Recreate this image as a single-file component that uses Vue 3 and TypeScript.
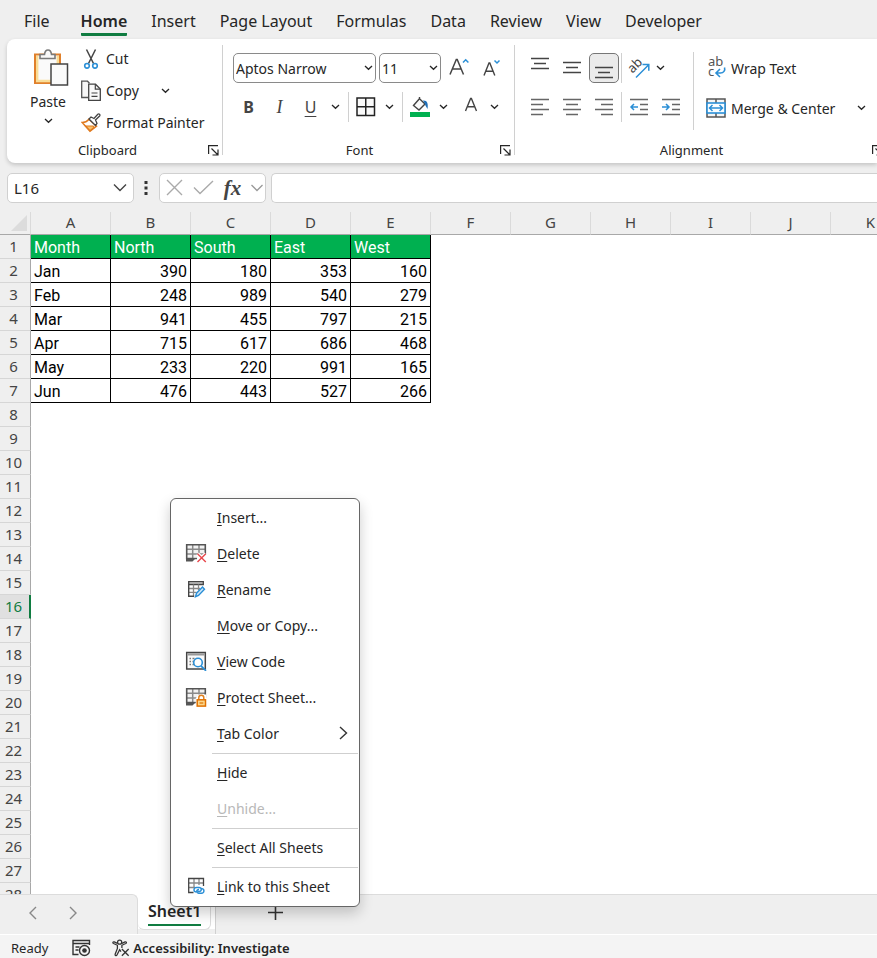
<script setup lang="ts">
import { h, ref } from 'vue'

interface MenuEntry {
  key: string
  rest: string
  icon?: string
  disabled?: boolean
  submenu?: boolean
  ruleAfter?: boolean
}

const tabs = ['File', 'Home', 'Insert', 'Page Layout', 'Formulas', 'Data', 'Review', 'View', 'Developer']
const activeTab = ref('Home')

const columns = ['A', 'B', 'C', 'D', 'E', 'F', 'G', 'H', 'I', 'J', 'K']
const data: (string | number)[][] = [
  ['Month', 'North', 'South', 'East', 'West'],
  ['Jan', 390, 180, 353, 160],
  ['Feb', 248, 989, 540, 279],
  ['Mar', 941, 455, 797, 215],
  ['Apr', 715, 617, 686, 468],
  ['May', 233, 220, 991, 165],
  ['Jun', 476, 443, 527, 266],
]
const rowCount = 28
const activeRow = 16
const cellName = ref('L16')
const formula = ref('')
const fontName = ref('Aptos Narrow')
const fontSize = ref('11')

const menu: MenuEntry[] = [
  { key: 'I', rest: 'nsert...' },
  { key: 'D', rest: 'elete', icon: 'delete' },
  { key: 'R', rest: 'ename', icon: 'rename' },
  { key: 'M', rest: 'ove or Copy...' },
  { key: 'V', rest: 'iew Code', icon: 'code' },
  { key: 'P', rest: 'rotect Sheet...', icon: 'protect' },
  { key: 'T', rest: 'ab Color', submenu: true, ruleAfter: true },
  { key: 'H', rest: 'ide' },
  { key: 'U', rest: 'nhide...', disabled: true, ruleAfter: true },
  { key: 'S', rest: 'elect All Sheets', ruleAfter: true },
  { key: 'L', rest: 'ink to this Sheet', icon: 'link' },
]

const cellAt = (row: number, col: number) => data[row - 1]?.[col] ?? ''
const cellClass = (row: number, col: number) => ({
  filled: row <= data.length && col < 5,
  heading: row === 1 && col < 5,
  number: typeof cellAt(row, col) === 'number',
})

const Chevron = () =>
  h('svg', { width: 9, height: 6, viewBox: '0 0 9 6', 'aria-hidden': 'true' }, [
    h('path', { d: 'M1 1l3.5 3.3L8 1', fill: 'none', stroke: '#262626', 'stroke-width': 1.3 }),
  ])
const Launcher = () =>
  h('svg', { width: 11, height: 11, viewBox: '0 0 11 11', 'aria-hidden': 'true' }, [
    h('path', { d: 'M.6 9V.6H10M3.5 3.5l6 6M10 4.5V10H4.5', fill: 'none', stroke: '#262626', 'stroke-width': 1.2 }),
  ])
</script>

<template>
  <div class="app">
    <nav class="tabs" aria-label="Ribbon tabs">
      <button
        v-for="tab in tabs"
        :key="tab"
        class="tab"
        :class="{ active: tab === activeTab, file: tab === 'File' }"
        @click="activeTab = tab"
      >{{ tab }}</button>
    </nav>

    <section class="ribbon">
      <div class="group clipboard">
        <div class="body">
          <button class="paste">
            <svg width="36" height="40" viewBox="0 0 36 40">
              <rect x="2" y="6.5" width="25" height="28.5" fill="#fafafa" stroke="#e0802b" stroke-width="2" />
              <path d="M4.2 8v25h20.6V8" fill="none" stroke="#f9dd97" stroke-width="2.4" />
              <path d="M7 10.500V6.500h4.500c.3-3 1.600-4.500 3.500-4.500s3.200 1.500 3.500 4.500H22v4z" fill="#fafafa" stroke="#7a7a7a" stroke-width="1.600" />
              <rect x="18" y="16" width="16.500" height="21" fill="#fafafa" stroke="#444" stroke-width="1.500" />
            </svg>
            <span>Paste</span>
            <Chevron />
          </button>
          <div class="stack">
            <button class="command">
              <svg width="20" height="22" viewBox="0 0 20 22">
                <path d="M5.500 1.500l7 14M14.500 1.500l-7 14" fill="none" stroke="#444" stroke-width="1.500" />
                <circle cx="6" cy="17.800" r="2.300" fill="#fff" stroke="#2b8fd6" stroke-width="1.600" />
                <circle cx="14" cy="17.800" r="2.300" fill="#fff" stroke="#2b8fd6" stroke-width="1.600" />
              </svg>
              <span>Cut</span>
            </button>
            <button class="command">
              <svg width="20" height="22" viewBox="0 0 20 22">
                <path d="M7 17.500H.7V1.200h5.800l2 2" fill="#f7f7f7" stroke="#555" stroke-width="1.300" />
                <path d="M7.700 4.200h6.800L19.300 9v11.300H7.700z" fill="#fafafa" stroke="#444" stroke-width="1.300" />
                <path d="M14.300 4.200v5h5M10.500 13h6M10.500 16.300h6" fill="none" stroke="#444" stroke-width="1.200" />
              </svg>
              <span>Copy</span>
              <Chevron class="copy-more" />
            </button>
            <button class="command">
              <svg width="20" height="22" viewBox="0 0 20 22">
                <path d="M1.200 10.500c3 0 4.800-.8 6.800-3.300l7.500 7-6.500 5z" fill="#fff" stroke="#e07a1f" stroke-width="1.500" />
                <path d="M4.500 14h7.500l1 1.500-4 3.200z" fill="#f6c16b" stroke="#e07a1f" stroke-width="1.200" />
                <path d="M8 7l2-2 3 1.500 3.800-4.300c1.200-1 2.800.5 1.800 1.800L14.500 8l1.500 3.500-1.500 2z" fill="#fff" stroke="#444" stroke-width="1.300" />
              </svg>
              <span>Format Painter</span>
            </button>
          </div>
        </div>
        <div class="caption"><span>Clipboard</span><button aria-label="Clipboard settings"><Launcher /></button></div>
      </div>

      <div class="group font">
        <div class="body rows">
          <div class="row">
            <label class="picker name">
              <select v-model="fontName" aria-label="Font"><option>Aptos Narrow</option></select>
              <Chevron />
            </label>
            <label class="picker size">
              <select v-model="fontSize" aria-label="Font size"><option>11</option></select>
              <Chevron />
            </label>
            <button class="tool grow" aria-label="Increase font size">
              <svg width="22" height="22" viewBox="0 0 22 22">
                <path d="M2 17.500L8.300 2.500h.9l6.300 15M4.500 12h8.500" fill="none" stroke="#444" stroke-width="1.500" />
                <path d="M15 5.500l2.700-2.700L20.400 5.500" fill="none" stroke="#2b8fd6" stroke-width="1.500" />
              </svg>
            </button>
            <button class="tool shrink" aria-label="Decrease font size">
              <svg width="20" height="22" viewBox="0 0 20 22">
                <path d="M2 18.500L7 6h.8l5 12.500M4 14.200h7" fill="none" stroke="#444" stroke-width="1.400" />
                <path d="M12.500 3.500L15 6l2.500-2.500" fill="none" stroke="#2b8fd6" stroke-width="1.500" />
              </svg>
            </button>
          </div>
          <div class="row">
            <button class="tool letter bold">B</button>
            <button class="tool letter italic">I</button>
            <button class="tool letter under">U</button>
            <button class="tool more" aria-label="Underline styles"><Chevron /></button>
            <i class="divider"></i>
            <button class="tool" aria-label="Borders">
              <svg width="20" height="20" viewBox="0 0 20 20">
                <path d="M1 1h17.500v17.500H1zM9.750 1v17.500M1 9.750h17.500" fill="#fafafa" stroke="#222" stroke-width="1.500" />
              </svg>
            </button>
            <button class="tool more" aria-label="Border styles"><Chevron /></button>
            <i class="divider"></i>
            <button class="tool" aria-label="Fill color">
              <svg width="20" height="22" viewBox="0 0 20 22">
                <path d="M9.200 3L3.500 9.500l5.500 4.500L15 8 9.500 2.800V1" fill="#fafafa" stroke="#444" stroke-width="1.400" />
                <path d="M13 4.500c4-.5 5.500 3 4.500 8.500-1.200-2-2.300-3.500-2.500-5z" fill="#1f6fb8" />
                <rect y="16" width="20" height="5" fill="#00b050" />
              </svg>
            </button>
            <button class="tool more" aria-label="Fill colors"><Chevron /></button>
            <button class="tool font-color" aria-label="Font color">
              <svg width="14" height="22" viewBox="0 0 14 22">
                <path d="M1.500 15L6.600 2.500h.8l5.100 12.500M3.500 10.800h7" fill="none" stroke="#444" stroke-width="1.400" />
              </svg>
            </button>
            <button class="tool more" aria-label="Font colors"><Chevron /></button>
          </div>
        </div>
        <div class="caption"><span>Font</span><button aria-label="Font settings"><Launcher /></button></div>
      </div>

      <div class="group alignment">
        <div class="body">
          <div class="rows">
            <div class="row">
              <button class="tool square" aria-label="Top align">
                <svg width="20" height="30" viewBox="0 0 20 30"><path d="M1 5.500h18M4 10.500h12M1 15.500h18" stroke="#444" stroke-width="1.400" /></svg>
              </button>
              <button class="tool square" aria-label="Middle align">
                <svg width="20" height="30" viewBox="0 0 20 30"><path d="M1 9.500h18M4 14.500h12M1 19.500h18" stroke="#444" stroke-width="1.400" /></svg>
              </button>
              <button class="tool square pressed" aria-label="Bottom align">
                <svg width="20" height="30" viewBox="0 0 20 30"><path d="M1 14.500h18M4 19.500h12M1 24.500h18" stroke="#444" stroke-width="1.400" /></svg>
              </button>
              <i class="divider"></i>
              <button class="tool" aria-label="Orientation">
                <svg class="lettered" width="22" height="24" viewBox="0 0 22 24">
                  <text transform="rotate(-45 7 10)" x="-1" y="13" font-size="13" fill="#444">ab</text>
                  <path d="M7 21.500L19.500 9M13.500 8.500h6.300v6.300" fill="none" stroke="#2b8fd6" stroke-width="1.500" />
                </svg>
              </button>
              <button class="tool more orient-more" aria-label="Orientation options"><Chevron /></button>
            </div>
            <div class="row">
              <button class="tool square" aria-label="Align left">
                <svg width="20" height="20" viewBox="0 0 20 20"><path d="M1 2.500h18M1 7.500h12M1 12.500h18M1 17.500h12" stroke="#666" stroke-width="1.600" /></svg>
              </button>
              <button class="tool square" aria-label="Center">
                <svg width="20" height="20" viewBox="0 0 20 20"><path d="M1 2.500h18M4 7.500h12M1 12.500h18M4 17.500h12" stroke="#666" stroke-width="1.600" /></svg>
              </button>
              <button class="tool square" aria-label="Align right">
                <svg width="20" height="20" viewBox="0 0 20 20"><path d="M1 2.500h18M7 7.500h12M1 12.500h18M7 17.500h12" stroke="#666" stroke-width="1.600" /></svg>
              </button>
              <i class="divider"></i>
              <button class="tool indent" aria-label="Decrease indent">
                <svg width="20" height="20" viewBox="0 0 20 20">
                  <path d="M1 2.500h18M11 7.500h8M11 12.500h8M1 17.500h18" stroke="#666" stroke-width="1.600" />
                  <path d="M9 10H2M5 7l-3 3 3 3" fill="none" stroke="#2b8fd6" stroke-width="1.500" />
                </svg>
              </button>
              <button class="tool indent" aria-label="Increase indent">
                <svg width="20" height="20" viewBox="0 0 20 20">
                  <path d="M1 2.500h18M11 7.500h8M11 12.500h8M1 17.500h18" stroke="#666" stroke-width="1.600" />
                  <path d="M1 10h7M5 7l3 3-3 3" fill="none" stroke="#2b8fd6" stroke-width="1.500" />
                </svg>
              </button>
            </div>
          </div>
          <i class="divider tall"></i>
          <div class="rows wide">
            <button class="command">
              <svg class="lettered" width="20" height="20" viewBox="0 0 20 20">
                <text x="2" y="8" font-size="13" fill="#555">ab</text>
                <text x="2" y="18" font-size="13" fill="#555">c</text>
                <path d="M18.500 9.500c1 3-1 5.500-4 5.500h-4M14 11l-4 4 4 4" fill="none" stroke="#2b8fd6" stroke-width="1.600" />
              </svg>
              <span>Wrap Text</span>
            </button>
            <button class="command">
              <svg width="20" height="20" viewBox="0 0 20 20">
                <path d="M1 1h18v18H1zM10 1v18" fill="#f5f5f5" stroke="#555" stroke-width="1.500" />
                <rect x="1" y="5" width="18" height="10" fill="#fafdff" stroke="#2b8fd6" stroke-width="1.600" />
                <path d="M3.500 10h13M6.500 7l-3 3 3 3M13.500 7l3 3-3 3" fill="none" stroke="#2b8fd6" stroke-width="1.500" />
              </svg>
              <span>Merge &amp; Center</span>
              <Chevron class="merge-more" />
            </button>
          </div>
        </div>
        <div class="caption"><span>Alignment</span><button aria-label="Alignment settings"><Launcher /></button></div>
      </div>
    </section>

    <section class="formula-bar">
      <div class="box name-box">
        <input v-model="cellName" aria-label="Name box" />
        <button aria-label="Named ranges">
          <svg width="14" height="9" viewBox="0 0 14 9"><path d="M1 1.500l6 6 6-6" fill="none" stroke="#444" stroke-width="1.400" /></svg>
        </button>
      </div>
      <svg class="dots" width="4" height="14" viewBox="0 0 4 14"><path d="M.5 0h3v3h-3zM.5 5.500h3v3h-3zM.5 11h3v3h-3z" fill="#333" /></svg>
      <div class="box actions">
        <button aria-label="Cancel">
          <svg width="17" height="17" viewBox="0 0 17 17"><path d="M1 1l15 15M16 1L1 16" stroke="#aaa" stroke-width="1.400" /></svg>
        </button>
        <button aria-label="Enter">
          <svg width="21" height="15" viewBox="0 0 21 15"><path d="M1 7.500l6 6L20 1" fill="none" stroke="#aaa" stroke-width="1.400" /></svg>
        </button>
        <button class="fx" aria-label="Insert function">fx</button>
        <button aria-label="Recent functions">
          <svg width="12" height="8" viewBox="0 0 12 8"><path d="M.5 1L6 6.500 11.500 1" fill="none" stroke="#999" stroke-width="1.300" /></svg>
        </button>
      </div>
      <input v-model="formula" class="box formula" aria-label="Formula" />
    </section>

    <main class="sheet">
      <table>
        <colgroup><col class="row-col" /><col v-for="c in columns" :key="c" class="data-col" /></colgroup>
        <thead>
          <tr>
            <th class="corner" aria-label="Select all"><svg width="17" height="17" viewBox="0 0 17 17"><path d="M16 0v16H0z" fill="#dcdcdc" /></svg></th>
            <th v-for="c in columns" :key="c" scope="col">{{ c }}</th>
          </tr>
        </thead>
        <tbody>
          <tr v-for="r in rowCount" :key="r">
            <th scope="row" :class="{ current: r === activeRow }">{{ r }}</th>
            <td v-for="(c, i) in columns" :key="c" :class="cellClass(r, i)">{{ cellAt(r, i) }}</td>
          </tr>
        </tbody>
      </table>
    </main>

    <footer class="sheet-bar">
      <div class="arrows">
        <button aria-label="Previous sheet"><svg width="9" height="14" viewBox="0 0 9 14"><path d="M8 1L2 7l6 6" fill="none" stroke="#888" stroke-width="1.400" /></svg></button>
        <button aria-label="Next sheet"><svg width="9" height="14" viewBox="0 0 9 14"><path d="M1 1l6 6-6 6" fill="none" stroke="#888" stroke-width="1.400" /></svg></button>
      </div>
      <button class="sheet-tab"><span>Sheet1</span></button>
      <div class="rest">
        <button aria-label="New sheet"><svg width="15" height="15" viewBox="0 0 15 15"><path d="M7.500 0v15M0 7.500h15" stroke="#333" stroke-width="1.600" /></svg></button>
      </div>
    </footer>

    <div class="status">
      <span>Ready</span>
      <svg width="19" height="18" viewBox="0 0 19 18">
        <path d="M6.500 15.500H1V1.500h16.500V6M1 4.500h16.500M3.500 8h4M3.500 11h3" fill="none" stroke="#333" stroke-width="1.400" />
        <circle cx="12.500" cy="11.500" r="5" fill="#f4f4f4" stroke="#333" stroke-width="1.400" />
        <circle cx="12.500" cy="11.500" r="2.300" fill="#333" />
      </svg>
      <button class="access">
        <svg width="18" height="18" viewBox="0 0 20 20">
          <circle cx="8.500" cy="3.500" r="2.300" fill="none" stroke="#333" stroke-width="1.400" />
          <path d="M6 4.800L2.500 3.200c-1.500-.5-2 1.200-.8 1.800L6 7v3.500L3.500 17c-.3 1.500 1.400 2 2 .8L8.500 12l1.500 2M11 4.800l3.500-1.600c1.500-.5 2 1.200.8 1.800L11 7v3" fill="none" stroke="#333" stroke-width="1.400" />
          <path d="M11 11l7.500 7.500M18.500 11L11 18.500" stroke="#333" stroke-width="1.500" />
        </svg>
        <span>Accessibility: Investigate</span>
      </button>
    </div>

    <div class="menu" role="menu">
      <template v-for="m in menu" :key="m.key">
        <button class="item" role="menuitem" :disabled="m.disabled">
          <span class="icon">
            <svg v-if="m.icon === 'delete' || m.icon === 'protect'" width="22" height="20" viewBox="0 0 22 20">
              <path d="M1.700 1.700h18.600V14H8.500l-2.200 3.500H1.700z" fill="#f2f2f2" />
              <path d="M1.700 6.200h18.600M1.700 11h18.600M7.700 1.700V15M14 1.700V14" fill="none" stroke="#8a8a8a" stroke-width="1.500" />
              <path d="M12 15.500H1.700V1.700h18.600V11" fill="none" stroke="#555" stroke-width="1.600" />
              <path d="M1 15.500h9.500L7.500 18.500H1z" fill="#555" />
              <g v-if="m.icon === 'delete'">
                <path d="M12.500 10.800l8 8M20.800 10.800l-8 8" stroke="#fff" stroke-width="4" />
                <path d="M12.500 10.800l8.300 8.300M20.800 10.800l-8.300 8.300" stroke="#e8474c" stroke-width="1.400" />
              </g>
              <g v-else>
                <path d="M10.800 11.500L13 7.500h8v12H10.800z" fill="#fff" />
                <path d="M13.800 13v-2.200a2.500 2.500 0 0 1 5 0V13" fill="none" stroke="#e0801f" stroke-width="1.500" />
                <rect x="12.200" y="12.800" width="8.300" height="6.300" fill="#fbd78b" stroke="#e07000" stroke-width="1.500" />
                <path d="M14.500 16h3.800" stroke="#e07000" stroke-width="1.200" />
              </g>
            </svg>
            <svg v-else-if="m.icon === 'rename'" width="22" height="20" viewBox="0 0 22 20">
              <path d="M3.700 2.700h14.600v2.800H3.700z" fill="#ccc" stroke="#444" stroke-width="1.300" />
              <path d="M4 9.500h11M4 13.300h7.500M8.500 5.500v11.500M13.500 5.500v5.500" fill="none" stroke="#888" stroke-width="1.300" />
              <path d="M3.700 5.500v11.800h5.500" fill="none" stroke="#444" stroke-width="1.400" />
              <path d="M10.500 17.700l1-3.500 6-6.200 2 2.200-6 6.200z" fill="#cfe6f7" stroke="#2b8fd6" stroke-width="1.400" />
            </svg>
            <svg v-else-if="m.icon === 'code'" width="22" height="20" viewBox="0 0 22 20">
              <path d="M1.700 1.500h18.600V18H1.700z" fill="#fafafa" stroke="#444" stroke-width="1.500" />
              <path d="M2.500 2.300h17v2.200h-17z" fill="#999" />
              <path d="M4.500 7.500h1.500M7.500 7.500h2M4.500 10.500h1.500M7.500 10.500h1.500M4.500 13.500h1.500M7.500 13.500h1.500" stroke="#777" stroke-width="1.300" />
              <circle cx="13" cy="11.500" r="4.300" fill="#fff" stroke="#2b8fd6" stroke-width="1.600" />
              <path d="M16 14.800l5 5" stroke="#2b8fd6" stroke-width="1.800" />
            </svg>
            <svg v-else-if="m.icon === 'link'" width="22" height="20" viewBox="0 0 22 20">
              <path d="M4 7h15M4 11.500h6M9 2.500V11M14 2.500V9" fill="none" stroke="#888" stroke-width="1.300" />
              <path d="M8.500 16.500H3.700V2.500h14.800V10" fill="none" stroke="#444" stroke-width="1.300" />
              <path d="M11 16c-3-.5-2.500-4.500.5-4.500h2.500c3 0 3 4 0 4h-1.500M16.500 12.500c3.500.5 3 4.700 0 4.700H13.500c-2.500 0-2.500-3.700.5-3.700" fill="none" stroke="#2b8fd6" stroke-width="1.400" />
            </svg>
          </span>
          <span class="text"><u>{{ m.key }}</u>{{ m.rest }}</span>
          <svg v-if="m.submenu" class="arrow" width="9" height="14" viewBox="0 0 9 14"><path d="M1 1l6.500 6L1 13" fill="none" stroke="#333" stroke-width="1.400" /></svg>
        </button>
        <hr v-if="m.ruleAfter" />
      </template>
    </div>
  </div>
</template>

<style>
body {
  overflow: hidden;
}
</style>

<style scoped>
.app {
  position: relative;
  display: flex;
  flex-direction: column;
  height: 100vh;
  overflow: hidden;
  background: #efefef;
  color: #262626;
  font: 14px/20px "Noto Sans", sans-serif;
}
.app * {
  box-sizing: border-box;
}
button,
input,
select {
  margin: 0;
  padding: 0;
  border: 0;
  background: none;
  color: inherit;
  font: inherit;
}
button {
  display: flex;
  align-items: center;
  white-space: nowrap;
}
svg {
  display: block;
  flex: none;
}
.lettered {
  overflow: visible;
}
.tabs {
  display: flex;
  gap: 24px;
  padding: 6px 24px 3px;
}
.tab {
  height: 30px;
  padding-top: 2px;
  font-size: 16px;
  border-bottom: 3px solid transparent;
}
.tab.file {
  margin-right: 7px;
}
.tab.active {
  font-weight: 600;
  border-bottom-color: #107c41;
  border-radius: 1px;
}
.ribbon {
  display: flex;
  height: 124px;
  margin-left: 7px;
  padding: 6px 0 4px;
  background: #fff;
  border-radius: 8px 0 0 8px;
  box-shadow: 0 2px 4px rgba(0, 0, 0, 0.18);
}
.group {
  display: flex;
  flex: none;
  flex-direction: column;
  height: 110px;
  border-right: 1px solid #d0d0d0;
}
.clipboard {
  width: 216px;
}
.font {
  width: 292px;
}
.alignment {
  width: 372px;
}
.body {
  display: flex;
  flex: 1;
}
.caption {
  display: flex;
  align-items: center;
  height: 14px;
  margin-bottom: -2px;
  padding-right: 3px;
  font-size: 13px;
}
.caption span {
  flex: 1;
  text-align: center;
}
.font .caption span,
.alignment .caption span {
  padding-right: 4px;
}
.paste {
  flex-direction: column;
  width: 42px;
  margin-left: 20px;
  padding-top: 3px;
  justify-content: flex-start;
}
.paste svg:first-child {
  align-self: flex-end;
}
.paste span {
  margin: 4px 0 6px;
}
.stack {
  display: grid;
  grid-auto-rows: 32px;
  margin: -2px 0 0 12px;
}
.command {
  gap: 5px;
}
.copy-more,
.merge-more {
  margin-left: 17px;
}
.rows {
  display: flex;
  flex-direction: column;
  gap: 9px;
  padding-top: 8px;
}
.row {
  display: flex;
  height: 30px;
  align-items: center;
}
.font .body {
  padding-left: 10px;
}
.picker {
  display: grid;
  align-items: center;
  margin-right: 3px;
}
.picker > * {
  grid-area: 1 / 1;
}
.picker svg {
  justify-self: end;
  margin-right: 3px;
  pointer-events: none;
}
.picker select {
  width: 100%;
  height: 30px;
  padding: 2px 0 0 2px;
  border: 1px solid #8a8a8a;
  border-radius: 5px;
  background: #fff;
  appearance: none;
}
.picker.name {
  width: 143px;
}
.picker.size {
  width: 62px;
}
.tool {
  justify-content: center;
}
.grow {
  margin: 0 12px 0 4px;
}
.letter {
  width: 31px;
  font-size: 16px;
  color: #444;
}
.bold {
  font-weight: 700;
}
.italic {
  font-family: "Liberation Serif", serif;
  font-style: italic;
  font-size: 18px;
}
.under {
  text-decoration: underline;
  text-underline-offset: 3px;
}
.more {
  width: 26px;
}
.letter + .more {
  width: 22px;
  padding-right: 3px;
}
.font-color {
  margin: 0 3px 0 8px;
}
.orient-more {
  width: 18px;
}
.divider {
  flex: none;
  width: 1px;
  height: 30px;
  margin: 0 7px 0 0;
  background: #d0d0d0;
}
.alignment .body {
  padding-left: 9px;
}
.alignment .divider {
  margin: 0 7px 0 1px;
}
.square {
  width: 32px;
  height: 30px;
}
.square.pressed {
  width: 30px;
  margin: 0 1px;
  border: 1px solid #777;
  border-radius: 5px;
  background: #ebebeb;
}
.indent {
  width: 20px;
  margin-right: 12px;
}
.alignment .divider.tall {
  height: 78px;
  margin: 7px 12px 0 0;
}
.wide {
  gap: 10px;
}
.wide .command {
  height: 30px;
}
.wide .command span {
  padding-top: 1px;
}
.formula-bar {
  display: flex;
  align-items: center;
  height: 49px;
  padding-left: 7px;
}
.box {
  display: flex;
  align-items: center;
  height: 30px;
  border: 1px solid #d0d0d0;
  border-radius: 5px;
  background: #fff;
}
.name-box {
  width: 127px;
  padding: 0 6px;
}
.name-box input {
  flex: 1;
  min-width: 0;
  font-size: 15px;
}
.dots {
  margin: 0 11px 0 10px;
}
.actions {
  justify-content: space-between;
  width: 107px;
  padding: 0 2px 0 6px;
}
.fx {
  font: italic 700 21px/24px "Liberation Serif", serif;
  color: #444;
}
.formula {
  flex: 1;
  margin-left: 5px;
  border-right: 0;
  border-radius: 5px 0 0 5px;
}
.sheet {
  flex: 1;
  min-height: 0;
  overflow: hidden;
  background: #fff;
}
table {
  width: 911px;
  table-layout: fixed;
  border-collapse: separate;
  border-spacing: 0;
}
.row-col {
  width: 31px;
}
.data-col {
  width: 80px;
}
th,
td {
  height: 24px;
  padding: 0;
  line-height: 23px;
}
th {
  background: #efefef;
  color: #444;
  font-size: 15px;
  font-weight: 400;
}
thead th {
  height: 23px;
  line-height: 20px;
  padding-bottom: 2px;
  border-right: 1px solid #dadada;
  border-bottom: 1px solid #a8a8a8;
}
.corner svg {
  margin: 2px 0 0 11px;
}
tbody th {
  padding-right: 3px;
  border-right: 1px solid #a8a8a8;
  border-bottom: 1px solid #d6d6d6;
}
tbody th.current {
  padding-right: 2px;
  border-right: 2px solid #107c41;
  background: #e0e0e0;
  color: #107c41;
}
td {
  font-family: Roboto, sans-serif;
  font-size: 16px;
  color: #000;
}
.filled {
  padding: 2px 3px 0;
  line-height: 21px;
  border-right: 1px solid #000;
  border-bottom: 1px solid #000;
}
.heading {
  background: #00b050;
  color: #fff;
}
.number {
  text-align: right;
}
.sheet-bar {
  display: flex;
  height: 40px;
  background: linear-gradient(#fff 35px, #efefef 35px);
}
.arrows {
  display: flex;
  gap: 32px;
  width: 138px;
  padding: 0 0 4px 28px;
  background: #efefef;
  border-top: 1px solid #dcdcdc;
  border-right: 1px solid #dcdcdc;
  border-radius: 0 6px 0 0;
}
.sheet-tab {
  align-items: flex-start;
  width: 73px;
  height: 36px;
  padding: 6px 0 0 10px;
  border: 1px solid #dcdcdc;
  border-width: 0 1px 1px 0;
  border-radius: 0 0 6px 6px;
}
.sheet-tab span {
  height: 26px;
  font-size: 16px;
  font-weight: 600;
  line-height: 22px;
  border-bottom: 2px solid #107c41;
}
.rest {
  display: flex;
  flex: 1;
  margin-left: 4px;
  padding: 0 0 4px 52px;
  background: #efefef;
  border-top: 1px solid #dcdcdc;
  border-left: 1px solid #d0d0d0;
}
.status {
  display: flex;
  align-items: center;
  height: 24px;
  padding: 2px 11px 0;
  border-top: 1px solid #fff;
  background: #f4f4f4;
  font-size: 13px;
}
.status > svg {
  margin: 0 21px 0 24px;
}
.access {
  gap: 3px;
  font-weight: 600;
}
.menu {
  position: absolute;
  left: 170px;
  bottom: 51px;
  width: 190px;
  padding: 1px 0;
  border: 1px solid #666;
  border-radius: 6px;
  background: #fff;
  box-shadow: 0 6px 14px rgba(0, 0, 0, 0.2);
}
.item {
  width: 100%;
  height: 36px;
  padding: 0 11px 0 14px;
  text-align: left;
}
.item:disabled {
  color: #b8b8b8;
}
.icon {
  width: 22px;
  margin: 0 10px 3px 0;
}
.arrow {
  margin-bottom: 3px;
}
.text {
  flex: 1;
}
u {
  text-underline-offset: 2px;
}
hr {
  height: 1px;
  margin: 1px 1px 1px 41px;
  border: 0;
  background: #cfcfcf;
}
</style>
